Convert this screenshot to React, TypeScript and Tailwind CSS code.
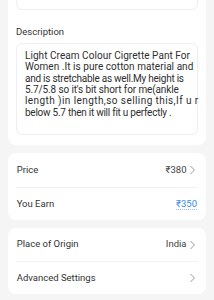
import React from "react";

function Chevron() {
  return (
    <svg width="8" height="10" viewBox="0 0 8 10" className="ml-[2.5px] shrink-0">
      <path d="M1.8 1.3 L5.4 5 L1.8 8.7" fill="none" stroke="#9a9a9a" strokeWidth="1" strokeLinecap="round" strokeLinejoin="round" />
    </svg>
  );
}

function Row({ label, value, chevron = true, h, blue = false }: { label: string; value?: string; chevron?: boolean; h: string; blue?: boolean }) {
  return (
    <div className={`flex items-center justify-between pl-[8.7px] pr-[9px] ${h}`}>
      <span className="text-[9.5px] text-[#333333]">{label}</span>
      <div className="flex items-center">
        {value && (
          blue ? (
            <span className="text-[9.5px] text-[#3b8cec] underline decoration-dotted decoration-[#9cc4f5] underline-offset-[2px]">{value}</span>
          ) : (
            <span className="text-[9.5px] text-[#444444]">{value}</span>
          )
        )}
        {chevron && <Chevron />}
      </div>
    </div>
  );
}

const lines: { t: string; c: string }[] = [
  { t: "Light Cream Colour Cigrette Pant For", c: "tracking-[0.05px]" },
  { t: "Women .It is pure cotton material and", c: "tracking-[0.05px]" },
  { t: "and is stretchable as well.My height is", c: "tracking-[-0.25px]" },
  { t: "5.7/5.8 so it's bit short for me(ankle", c: "tracking-[-0.12px]" },
  { t: "length )in length,so selling this,If u r", c: "tracking-[0.42px]" },
  { t: "below 5.7 then it will fit u perfectly .", c: "tracking-[-0.25px]" },
];

export default function App() {
  return (
    <div className="h-[300px] w-[214px] overflow-hidden bg-[#f5f5f5]" style={{ fontFamily: "Roboto, 'Noto Sans', sans-serif" }}>
      <div className="mx-2 mt-[-40px] rounded-[8px] bg-white px-2 pb-[10px]">
        <div className="flex h-[50px] flex-col justify-end overflow-hidden rounded-[6px] border border-[#efefef] pb-[11px] pl-[5px]">
          <div className="whitespace-nowrap text-[10px] leading-[11.4px] text-[#333333]">gy pant, light cream, legging</div>
        </div>
        <div className="mt-[16px] text-[9.5px] leading-[12px] text-[#333333]">Description</div>
        <div className="mt-[5px] h-[92px] rounded-[6px] border border-[#efefef] px-2 pt-[6px]">
          {lines.map((l) => (
            <div key={l.t} className={`whitespace-nowrap text-[10px] leading-[11.33px] text-[#2e2e2e] ${l.c}`}>{l.t}</div>
          ))}
        </div>
      </div>

      <div className="mx-2 mt-[8px] rounded-[8px] bg-white">
        <Row label="Price" value="₹380" h="h-[34px]" />
        <div className="mx-2 h-px bg-[#f2f2f2]" />
        <Row label="You Earn" value="₹350" chevron={false} blue h="h-[32px]" />
      </div>

      <div className="mx-2 mt-[8px] rounded-[8px] bg-white">
        <Row label="Place of Origin" value="India" h="h-[33px]" />
        <div className="mx-2 h-px bg-[#f2f2f2]" />
        <Row label="Advanced Settings" h="h-[32px]" />
      </div>
    </div>
  );
}
